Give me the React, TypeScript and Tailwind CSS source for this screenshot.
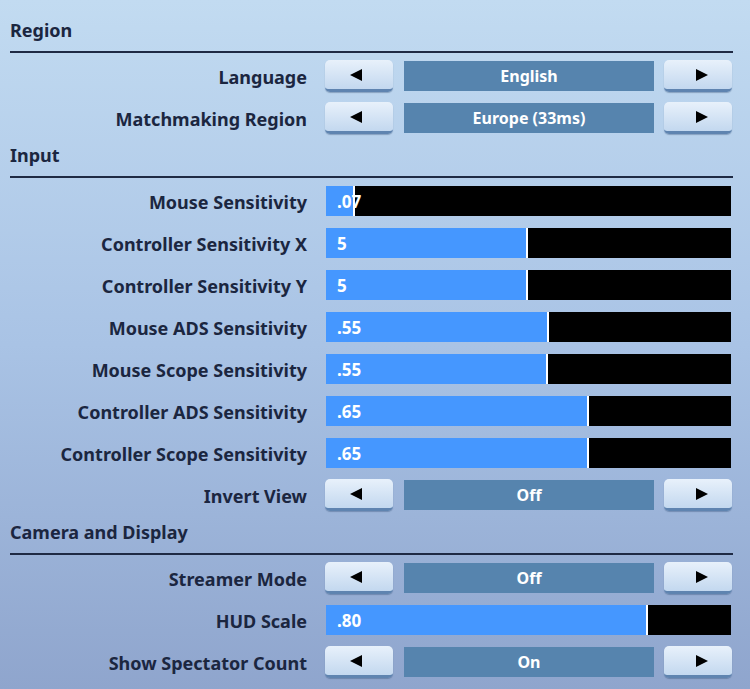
import React from "react";

const font = { fontFamily: '"Noto Sans", "Open Sans", sans-serif' };

function Header({ title }: { title: string }) {
  return (
    <div className="pt-[4px]">
      <div className="h-[24px] leading-[24px] text-[18px] font-bold text-[#1b2640]">{title}</div>
      <div className="mt-[9px] h-[2px] bg-[#1f2a44] mb-[2px]" />
    </div>
  );
}

function Arrow({ dir }: { dir: "l" | "r" }) {
  return (
    <svg width="13" height="12" viewBox="0 0 13 12">
      {dir === "l" ? <polygon points="0,6 12,0 12,12" fill="#000" /> : <polygon points="13,6 1,0 1,12" fill="#000" />}
    </svg>
  );
}

function Btn({ dir }: { dir: "l" | "r" }) {
  return (
    <div
      className={`h-[32px] w-[68px] rounded-[5px] border-b-[3px] border-[#5f84b0] bg-gradient-to-b from-[#e8f1fb] to-[#c3d8ef] flex items-center justify-center shadow-[0_1px_1px_rgba(40,70,110,0.35)] ${dir === "l" ? "pr-[6px]" : "pl-[6px]"}`}
    >
      <Arrow dir={dir} />
    </div>
  );
}

function Row({ label, children }: { label: string; children: React.ReactNode }) {
  return (
    <div className="h-[42px] flex items-center">
      <div className="flex-1 text-right pr-[18px] text-[18px] leading-[24px] pt-[2px] font-bold text-[#1b2640] whitespace-nowrap">{label}</div>
      <div className="w-[407px] mr-[1px]">{children}</div>
    </div>
  );
}

function Selector({ label, value }: { label: string; value: string }) {
  return (
    <Row label={label}>
      <div className="flex items-center">
        <Btn dir="l" />
        <div className="ml-[11px] mr-[10px] flex-1 h-[30px] bg-[#5684ae] flex items-center justify-center text-white text-[16px] font-bold">
          {value}
        </div>
        <Btn dir="r" />
      </div>
    </Row>
  );
}

function Slider({ label, value, fill }: { label: string; value: string; fill: number }) {
  return (
    <Row label={label}>
      <div className="mx-[1px] h-[30px] bg-black flex relative">
        <div className="h-full bg-[#4597ff] border-r-2 border-white" style={{ width: fill + 2 }} />
        <div className="absolute left-[11px] top-0 h-full flex items-center pt-[2px] text-white text-[17px] font-bold">{value}</div>
      </div>
    </Row>
  );
}

export default function App() {
  return (
    <div
      style={font}
      className="w-[750px] h-[689px] overflow-hidden bg-gradient-to-b from-[#c2dbf1] via-[#a9c3e5] to-[#8fa5cd] pl-[10px] pr-[17px] pt-[14px]"
    >
      <Header title="Region" />
      <Selector label="Language" value="English" />
      <Selector label="Matchmaking Region" value="Europe (33ms)" />
      <Header title="Input" />
      <Slider label="Mouse Sensitivity" value=".07" fill={27} />
      <Slider label="Controller Sensitivity X" value="5" fill={200} />
      <Slider label="Controller Sensitivity Y" value="5" fill={200} />
      <Slider label="Mouse ADS Sensitivity" value=".55" fill={221} />
      <Slider label="Mouse Scope Sensitivity" value=".55" fill={220} />
      <Slider label="Controller ADS Sensitivity" value=".65" fill={261} />
      <Slider label="Controller Scope Sensitivity" value=".65" fill={261} />
      <Selector label="Invert View" value="Off" />
      <Header title="Camera and Display" />
      <Selector label="Streamer Mode" value="Off" />
      <Slider label="HUD Scale" value=".80" fill={320} />
      <Selector label="Show Spectator Count" value="On" />
    </div>
  );
}
